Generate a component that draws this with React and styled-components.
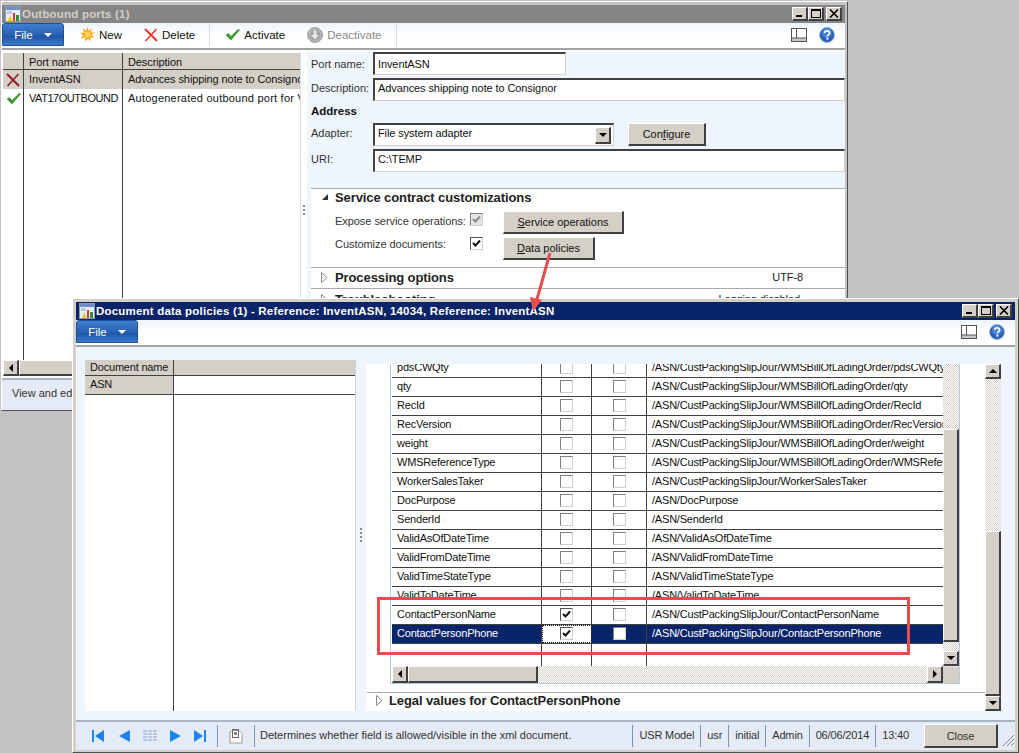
import React from 'react'
import styled, { createGlobalStyle } from 'styled-components'

const GlobalStyle = createGlobalStyle`
    html, body {
        margin: 0;
        padding: 0;
        background: #c4c3c4;
    }
    body {
        font-family: "Liberation Sans", Arial, sans-serif;
        font-size: 11px;
        color: #111;
    }
    * {
        box-sizing: border-box;
    }
`

const raised = `
    background: #d4d0c8;
    border-style: solid;
    border-width: 1px 2px 2px 1px;
    border-color: #fff #404040 #404040 #fff;
`

const hatch = `
    background: repeating-conic-gradient(#d4d0c8 0 25%, #fff 0 50%) 0 0 / 2px 2px;
`

const Canvas = styled.div`
    position: relative;
    width: 1019px;
    height: 753px;
    overflow: hidden;
`

const Frame = styled.div`
    position: absolute;
    left: ${(p) => p.$x}px;
    top: ${(p) => p.$y}px;
    width: ${(p) => p.$w}px;
    height: ${(p) => p.$h}px;
    display: flex;
    flex-direction: column;
    background: ${(p) => (p.$active ? '#d4d0c8' : '#c4c3c4')};
    border-style: solid;
    border-width: 1px;
    border-color: #fff #505050 #505050 #fff;
    padding: ${(p) => (p.$active ? '3px 3px 2px 3px' : '3px 2px 0 0')};
`

const TitleBar = styled.div`
    flex: 0 0 18px;
    display: flex;
    align-items: center;
    padding-left: 3px;
    background: ${(p) => (p.$active ? '#0a246a' : '#868586')};
    color: ${(p) => (p.$active ? '#fff' : '#d4d0c8')};
    font-size: 11.5px;
    font-weight: bold;
`

const TitleText = styled.span`
    margin-left: 1px;
    white-space: nowrap;
    letter-spacing: 0.2px;
`

const WinButtons = styled.div`
    margin-left: auto;
    margin-right: 3px;
    display: flex;
`

const WinButton = styled.div`
    ${raised}
    width: 16px;
    height: 14px;
    margin-left: ${(p) => (p.$gap ? '2px' : '0')};
    display: flex;
    align-items: center;
    justify-content: center;
`

const Toolbar = styled.div`
    flex: 0 0 ${(p) => p.$h}px;
    display: flex;
    align-items: center;
    padding-bottom: 2px;
    background: linear-gradient(#edf4fc, #fff 45%, #fff);
    border-bottom: 2px solid #a3a3a3;
`

const FileButton = styled.div`
    width: 62px;
    height: 23px;
    display: flex;
    align-items: center;
    justify-content: center;
    gap: 11px;
    color: #fff;
    font-size: 11.5px;
    border: 1px solid #1c4f9e;
    border-radius: 3px 3px 0 0;
    background: linear-gradient(#3f7fd0, #2a62b4 50%, #1f56a8 60%, #3c7bd0);
`

const FileCaret = styled.span`
    width: 0;
    height: 0;
    border-left: 4px solid transparent;
    border-right: 4px solid transparent;
    border-top: 4px solid #fff;
`

const ToolGroup = styled.div`
    display: flex;
    align-items: center;
    margin-left: 5px;
`

const ToolButton = styled.div`
    display: flex;
    align-items: center;
    gap: 4px;
    padding: 0 11px;
    font-size: 11.5px;
    color: ${(p) => (p.$off ? '#8a8a8a' : '#111')};
    white-space: nowrap;
`

const ToolSep = styled.div`
    width: 1px;
    height: 22px;
    background: #d8dde2;
    margin: 0 4px 0 3px;
`

const ToolRight = styled.div`
    margin-left: auto;
    display: flex;
    align-items: center;
    gap: 12px;
    margin-right: 10px;
`

const FirstBody = styled.div`
    flex: 1;
    min-height: 0;
    display: flex;
    padding-top: 2px;
    background: #fff;
`

const PortList = styled.div`
    flex: 0 0 299px;
    display: flex;
    flex-direction: column;
    padding: 1px 0 2px 1px;
    border-right: 1px solid #d6e0ea;
`

const PortRow = styled.div`
    display: grid;
    grid-template-columns: 21px 99px 1fr;
    flex: ${(p) => (p.$fill ? '1' : `0 0 ${p.$h || 19}px`)};
    background: ${(p) => (p.$on ? '#d4d0c8' : '#fff')};
    border-bottom: ${(p) => (p.$head ? '1px solid #404040' : '0')};
`

const PortCell = styled.div`
    display: flex;
    align-items: center;
    padding: ${(p) => (p.$icon ? '0 0 0 3px' : p.$head ? '1px 0 0 5px' : '0 0 2px 5px')};
    background: ${(p) => (p.$head ? '#d4d0c8' : 'transparent')};
    border-right: ${(p) => (p.$last ? '0' : '1px solid #404040')};
    letter-spacing: ${(p) => p.$spacing ?? -0.1}px;
    white-space: nowrap;
    overflow: hidden;
`

const HScrollBar = styled.div`
    flex: 0 0 ${(p) => p.$h || 17}px;
    display: flex;
    ${hatch}
`

const ScrollButton = styled.div`
    ${raised}
    flex: 0 0 ${(p) => p.$w || 16}px;
    display: flex;
    align-items: center;
    justify-content: center;
`

const HThumb = styled.div`
    ${raised}
    flex: 0 0 ${(p) => p.$w}px;
`

const Splitter = styled.div`
    flex: 0 0 ${(p) => p.$w}px;
    display: flex;
    flex-direction: column;
    align-items: center;
    gap: 2px;
    padding-top: ${(p) => p.$top}px;
`

const SplitDot = styled.span`
    width: 2px;
    height: 2px;
    background: #8a8a8a;
`

const FormPanel = styled.div`
    flex: 1;
    min-width: 0;
    display: flex;
    flex-direction: column;
    background: #eef5fd;
    padding-left: 4px;
    overflow: hidden;
`

const FieldRow = styled.div`
    flex: 0 0 23px;
    display: flex;
    align-items: center;
    margin-top: ${(p) => p.$top || 0}px;
`

const FieldLabel = styled.div`
    flex: 0 0 62px;
    color: #333;
    white-space: nowrap;
    padding-bottom: ${(p) => (p.$up ? '4px' : '0')};
`

const Field = styled.div`
    width: ${(p) => (p.$w ? `${p.$w}px` : 'auto')};
    flex: ${(p) => (p.$w ? '0 0 auto' : '1')};
    height: 23px;
    display: flex;
    align-items: center;
    padding: 0 2px ${(p) => (p.$up ? '4px' : '0')} 3px;
    background: #fff;
    letter-spacing: -0.1px;
    border-style: solid;
    border-width: 2px 1px 1px 2px;
    border-color: #404040 #d4d0c8 #d4d0c8 #404040;
`

const ComboButton = styled.div`
    ${raised}
    width: 16px;
    height: 17px;
    margin-left: auto;
    margin-bottom: -4px;
    display: flex;
    align-items: center;
    justify-content: center;
`

const GroupTitle = styled.div`
    flex: 0 0 20px;
    display: flex;
    align-items: center;
    font-weight: bold;
    font-size: 11.5px;
`

const FormButton = styled.div`
    ${raised}
    width: ${(p) => p.$w}px;
    height: 23px;
    margin-left: ${(p) => p.$left || 0}px;
    display: flex;
    align-items: center;
    justify-content: center;
    font-size: 11px;
    u {
        text-decoration: underline;
    }
`

const FastTabs = styled.div`
    flex: 1;
    background: #fff;
    margin-top: 16px;
    min-height: 0;
    display: flex;
    flex-direction: column;
`

const FastTab = styled.div`
    flex: 0 0 ${(p) => p.$h}px;
    border-top: 1px solid #a8a8a8;
`

const FastHead = styled.div`
    height: 20px;
    display: flex;
    align-items: center;
    font-size: 13px;
    font-weight: bold;
    letter-spacing: -0.1px;
    color: #222;
    padding: 0 0 ${(p) => p.$up || 0}px 24px;
`

const FastCaret = styled.span`
    width: 12px;
    margin-left: -14px;
    margin-right: 2px;
    display: flex;
`

const FastValue = styled.span`
    margin-left: auto;
    margin-right: ${(p) => p.$right}px;
    font-size: 11px;
    font-weight: normal;
`

const OptionRow = styled.div`
    display: flex;
    align-items: center;
    height: ${(p) => p.$h}px;
    padding-left: 24px;
    margin-top: ${(p) => p.$top || 0}px;
`

const OptionLabel = styled.div`
    flex: 0 0 135px;
    color: #333;
    white-space: nowrap;
    letter-spacing: -0.05px;
    padding-bottom: ${(p) => p.$up || 0}px;
`

const Check = styled.div`
    width: 13px;
    height: 13px;
    flex: 0 0 13px;
    display: flex;
    align-items: center;
    justify-content: center;
    background: ${(p) => (p.$off ? '#e4e4e4' : '#fff')};
    border-style: solid;
    border-width: 1px;
    border-color: ${(p) =>
        p.$strong ? '#555 #d4d0c8 #d4d0c8 #555' : '#808080 #d4d0c8 #d4d0c8 #808080'};
`

const OptionCheck = styled.div`
    flex: 0 0 33px;
    display: flex;
    padding-bottom: ${(p) => p.$up || 0}px;
`

const StatusBar = styled.div`
    flex: 0 0 ${(p) => p.$h}px;
    display: flex;
    align-items: center;
    background: #e4ebf6;
    border-top: 2px solid #a9b4c4;
    color: #333;
    white-space: nowrap;
    padding-bottom: ${(p) => p.$up || 0}px;
`

const StatusLead = styled.span`
    padding-left: 10px;
`

const SecondBody = styled.div`
    flex: 1;
    min-height: 0;
    display: flex;
    background: #eef5fd;
    padding: 13px 14px 9px 9px;
`

const DocList = styled.div`
    flex: 0 0 271px;
    display: flex;
    flex-direction: column;
    background: #fff;
    border-right: 1px solid #c8d4e0;
`

const DocRow = styled.div`
    display: grid;
    grid-template-columns: 89px 1fr;
    flex: ${(p) => (p.$fill ? '1' : `0 0 ${p.$h}px`)};
    border-bottom: ${(p) => (p.$fill ? '0' : '1px solid #404040')};
`

const DocCell = styled.div`
    display: flex;
    align-items: center;
    padding: 0 0 2px 5px;
    letter-spacing: -0.2px;
    background: ${(p) => (p.$gray ? '#d4d0c8' : 'transparent')};
    border-right: ${(p) => (p.$last ? '0' : '1px solid #404040')};
`

const DetailPane = styled.div`
    flex: 0 0 619px;
    margin-top: 4px;
    display: flex;
    flex-direction: column;
    background: #fff;
`

const OuterScroll = styled.div`
    flex: 0 0 16px;
    margin-top: 4px;
    display: flex;
    flex-direction: column;
    ${hatch}
`

const VSpacer = styled.div`
    flex: ${(p) => (p.$h ? `0 0 ${p.$h}px` : '1')};
`

const VThumb = styled.div`
    ${raised}
    flex: ${(p) => (p.$h ? `0 0 ${p.$h}px` : '1')};
`

const GridBox = styled.div`
    flex: 0 0 320px;
    margin-left: 24px;
    width: 570px;
    display: flex;
    background: #fff;
    border-style: solid;
    border-width: 0 1px 1px 1px;
    border-color: #b4cbe6;
    padding-left: 1px;
`

const GridList = styled.div`
    flex: 0 0 551px;
    min-width: 0;
    display: flex;
    flex-direction: column;
`

const DataRow = styled.div`
    display: grid;
    grid-template-columns: 150px 50px 55px 1fr;
    align-content: end;
    flex: ${(p) => (p.$fill ? '1' : `0 0 ${p.$h}px`)};
    overflow: hidden;
    background: ${(p) => (p.$on ? '#0a246a' : '#fff')};
    color: ${(p) => (p.$on ? '#fff' : '#111')};
    letter-spacing: -0.2px;
    border-bottom: ${(p) => (p.$fill ? '0' : '1px solid #404040')};
`

const DataCell = styled.div`
    height: ${(p) => (p.$fill ? '22px' : '18px')};
    display: flex;
    align-items: center;
    justify-content: ${(p) => (p.$center ? 'center' : 'flex-start')};
    padding: 0 0 ${(p) => (p.$fill ? '0' : '2px')} ${(p) => (p.$center ? '0' : '5px')};
    border-right: ${(p) => (p.$last ? '0' : '1px solid #404040')};
    white-space: nowrap;
    overflow: hidden;
    background: ${(p) => (p.$focus ? '#fff' : 'transparent')};
    outline: ${(p) => (p.$focus ? '1px dotted #111' : '0')};
    outline-offset: -1px;
`

const GridVScroll = styled.div`
    flex: 0 0 16px;
    display: flex;
    flex-direction: column;
    ${hatch}
`

const ScrollCorner = styled.div`
    flex: 0 0 16px;
    background: #d4d0c8;
`

const LegalTab = styled.div`
    margin-top: 8px;
    margin-left: 1px;
    height: 19px;
    border-top: 1px solid #a8a8a8;
    display: flex;
    align-items: center;
    padding: 0 0 4px 9px;
    gap: 6px;
    font-size: 13px;
    font-weight: bold;
    letter-spacing: -0.1px;
    color: #222;
`

const NavGroup = styled.div`
    display: flex;
    align-items: center;
    padding-left: 16px;
`

const NavIcon = styled.span`
    display: flex;
    margin-right: ${(p) => p.$gap}px;
`

const StatusSep = styled.span`
    width: 1px;
    height: 22px;
    background: #7c93b4;
    margin: 0 ${(p) => p.$right ?? 6}px 0 ${(p) => p.$left ?? 6}px;
`

const StatusMessage = styled.span`
    padding-bottom: 2px;
`

const StatusRight = styled.div`
    margin-left: auto;
    display: flex;
    align-items: center;
    letter-spacing: -0.15px;
`

const CloseButton = styled.div`
    ${raised}
    width: 74px;
    height: 24px;
    margin-left: 15px;
    display: flex;
    align-items: center;
    justify-content: center;
`

const Grip = styled.div`
    flex: 0 0 17px;
    align-self: flex-end;
    height: 14px;
    display: flex;
    justify-content: flex-end;
`

const RedBox = styled.div`
    position: absolute;
    left: 377px;
    top: 597px;
    width: 533px;
    height: 58px;
    border: 3px solid #e84c4c;
`

const ArrowLayer = styled.svg`
    position: absolute;
    left: 525px;
    top: 245px;
`

const AppIcon = () => (
    <svg width="16" height="16" viewBox="0 0 16 16">
        <rect x="0.5" y="0.5" width="15" height="15" fill="#e8eef6" stroke="#8d99ad" />
        <rect x="1" y="1" width="14" height="3" fill="#6f8fc4" />
        <rect x="2" y="5" width="5" height="3" fill="#b9c9e2" />
        <path d="M3 15 L5 9 L7 15 Z" fill="#f5c211" />
        <rect x="8" y="7" width="2" height="8" fill="#d8382c" />
        <rect x="11" y="9" width="3" height="6" fill="#2f8f3a" />
    </svg>
)

const SunIcon = () => (
    <svg width="15" height="15" viewBox="0 0 15 15">
        <path
            d="M7.5 0 L8.7 4 L12 1.6 L10.7 5.4 L15 5.6 L11.4 7.8 L14.6 10.7 L10.5 10.3 L10.6 14.6 L7.9 11.3 L5.4 14.8 L5 10.5 L0.8 11.6 L3.6 8.2 L0 6 L4.2 5.5 L2.8 1.6 L6.3 3.8 Z"
            fill="#f9a11b"
        />
        <circle cx="7.5" cy="7.5" r="3.2" fill="#fcd04a" />
    </svg>
)

const CrossIcon = ({ color = '#dc3a2a', size = 14 }) => (
    <svg width={size} height={size} viewBox="0 0 14 14">
        <path d="M1 1 L13 13" stroke={color} strokeWidth="2" fill="none" />
        <path d="M12.5 1 L1.5 13" stroke={color} strokeWidth="1.6" fill="none" />
    </svg>
)

const TickIcon = () => (
    <svg width="15" height="13" viewBox="0 0 15 13">
        <path d="M1 7 L3.5 5.5 L6 8.5 L13.5 1 L14.5 2 L6 12 Z" fill="#3a9a28" stroke="#2b7a1c" strokeWidth="0.5" />
    </svg>
)

const DownCircleIcon = () => (
    <svg width="16" height="16" viewBox="0 0 16 16">
        <circle cx="8" cy="8" r="7.5" fill="#b8b8b8" stroke="#9a9a9a" />
        <circle cx="8" cy="8" r="5.5" fill="#a4a4a4" />
        <path d="M6.5 3.5 H9.5 V8 H12 L8 12.5 L4 8 H6.5 Z" fill="#e8e8e8" />
    </svg>
)

const LayoutIcon = () => (
    <svg width="16" height="14" viewBox="0 0 16 14">
        <rect x="0.5" y="0.5" width="15" height="13" fill="#fff" stroke="#555" />
        <rect x="1" y="10" width="14" height="3" fill="#c8c8c8" />
        <path d="M5.5 0.5 V10" stroke="#555" />
        <path d="M0.5 10 H15.5" stroke="#555" />
    </svg>
)

const HelpIcon = () => (
    <svg width="16" height="16" viewBox="0 0 16 16">
        <circle cx="8" cy="8" r="7.5" fill="#2a5fb8" stroke="#9db4d4" />
        <circle cx="8" cy="6" r="5" fill="#4a82d8" />
        <path d="M5.6 6 C5.6 3.2 10.6 3.2 10.6 6 C10.6 7.6 8.4 7.6 8.4 9.4" fill="none" stroke="#fff" strokeWidth="1.6" />
        <rect x="7.4" y="10.6" width="2" height="2" fill="#fff" />
    </svg>
)

const MinGlyph = () => (
    <svg width="10" height="9" viewBox="0 0 10 9">
        <rect x="1" y="6" width="6" height="2" fill="#000" />
    </svg>
)

const MaxGlyph = () => (
    <svg width="10" height="9" viewBox="0 0 10 9">
        <rect x="0.5" y="0.5" width="9" height="8" fill="none" stroke="#000" />
        <rect x="0" y="0" width="10" height="2" fill="#000" />
    </svg>
)

const CloseGlyph = () => (
    <svg width="10" height="9" viewBox="0 0 10 9">
        <path d="M1 0.5 L9 8.5 M9 0.5 L1 8.5" stroke="#000" strokeWidth="1.6" />
    </svg>
)

const Tri = ({ dir = 'down' }) => {
    const points = {
        down: '0,0 8,0 4,4',
        up: '0,4 8,4 4,0',
        left: '4,0 4,8 0,4',
        right: '0,0 0,8 4,4',
    }[dir]
    const horizontal = dir === 'left' || dir === 'right'
    return (
        <svg width={horizontal ? 4 : 8} height={horizontal ? 8 : 4}>
            <polygon points={points} fill="#000" />
        </svg>
    )
}

const TickMark = ({ color = '#111' }) => (
    <svg width="9" height="9" viewBox="0 0 9 9">
        <path d="M1 4 L3.5 6.5 L8 1.5" fill="none" stroke={color} strokeWidth="2" />
    </svg>
)

const OpenCaret = () => (
    <svg width="8" height="8" viewBox="0 0 8 8">
        <polygon points="7,1 7,7 1,7" fill="#333" />
    </svg>
)

const ClosedCaret = () => (
    <svg width="7" height="11" viewBox="0 0 7 11">
        <polygon points="0.5,0.5 6,5.5 0.5,10.5" fill="#fff" stroke="#888" />
    </svg>
)

const First = () => (
    <svg width="12" height="12" viewBox="0 0 12 12">
        <rect x="0" y="0" width="2" height="12" fill="#1d84ee" />
        <polygon points="12,0 12,12 3,6" fill="#1d84ee" />
    </svg>
)

const Prev = () => (
    <svg width="12" height="12" viewBox="0 0 12 12">
        <polygon points="12,0 12,12 1,6" fill="#1d84ee" />
    </svg>
)

const Next = () => (
    <svg width="12" height="12" viewBox="0 0 12 12">
        <polygon points="0,0 0,12 11,6" fill="#1d84ee" />
    </svg>
)

const Last = () => (
    <svg width="12" height="12" viewBox="0 0 12 12">
        <polygon points="0,0 0,12 9,6" fill="#1d84ee" />
        <rect x="10" y="0" width="2" height="12" fill="#1d84ee" />
    </svg>
)

const GridGlyph = () => (
    <svg width="14" height="12" viewBox="0 0 14 12">
        {[0, 3, 6, 9].map((y) =>
            [0, 5, 10].map((x) => (
                <rect key={`${x}-${y}`} x={x} y={y} width="4" height="2" fill="#b4c8e4" />
            ))
        )}
    </svg>
)

const ClipGlyph = () => (
    <svg width="14" height="15" viewBox="0 0 14 15">
        <path d="M3.5 1.5 H10 L13 4.5 V14 H1 V3 Z" fill="#fff" stroke="#999" />
        <rect x="3.5" y="0.5" width="6" height="8" fill="none" stroke="#666" />
        <rect x="5" y="3" width="3" height="3" fill="#888" />
    </svg>
)

const GripGlyph = () => (
    <svg width="13" height="13" viewBox="0 0 13 13">
        <path d="M12 1 L1 12 M12 5 L5 12 M12 9 L9 12" stroke="#8a8a8a" fill="none" />
    </svg>
)

const WMS = '/ASN/CustPackingSlipJour/WMSBillOfLadingOrder/'

const rows = [
    { name: 'pdsCWQty', path: `${WMS}pdsCWQty` },
    { name: 'qty', path: `${WMS}qty` },
    { name: 'RecId', path: `${WMS}RecId` },
    { name: 'RecVersion', path: `${WMS}RecVersion` },
    { name: 'weight', path: `${WMS}weight` },
    { name: 'WMSReferenceType', path: `${WMS}WMSReferenceType` },
    { name: 'WorkerSalesTaker', path: '/ASN/CustPackingSlipJour/WorkerSalesTaker' },
    { name: 'DocPurpose', path: '/ASN/DocPurpose' },
    { name: 'SenderId', path: '/ASN/SenderId' },
    { name: 'ValidAsOfDateTime', path: '/ASN/ValidAsOfDateTime' },
    { name: 'ValidFromDateTime', path: '/ASN/ValidFromDateTime' },
    { name: 'ValidTimeStateType', path: '/ASN/ValidTimeStateType' },
    { name: 'ValidToDateTime', path: '/ASN/ValidToDateTime' },
    { name: 'ContactPersonName', path: '/ASN/CustPackingSlipJour/ContactPersonName', checked: true },
    { name: 'ContactPersonPhone', path: '/ASN/CustPackingSlipJour/ContactPersonPhone', checked: true, on: true },
]

function WindowButtons() {
    return (
        <WinButtons>
            <WinButton>
                <MinGlyph />
            </WinButton>
            <WinButton>
                <MaxGlyph />
            </WinButton>
            <WinButton $gap>
                <CloseGlyph />
            </WinButton>
        </WinButtons>
    )
}

function OutboundPorts() {
    return (
        <Frame $x={1} $y={1} $w={847} $h={410}>
            <TitleBar>
                <AppIcon />
                <TitleText>Outbound ports (1)</TitleText>
                <WindowButtons />
            </TitleBar>
            <Toolbar $h={27}>
                <FileButton>
                    File <FileCaret />
                </FileButton>
                <ToolGroup>
                    <ToolButton>
                        <SunIcon />
                        New
                    </ToolButton>
                    <ToolButton>
                        <CrossIcon />
                        Delete
                    </ToolButton>
                    <ToolSep />
                    <ToolButton>
                        <TickIcon />
                        Activate
                    </ToolButton>
                    <ToolButton $off>
                        <DownCircleIcon />
                        Deactivate
                    </ToolButton>
                    <ToolSep />
                </ToolGroup>
                <ToolRight>
                    <LayoutIcon />
                    <HelpIcon />
                </ToolRight>
            </Toolbar>
            <FirstBody>
                <PortList>
                    <PortRow $head $h={17}>
                        <PortCell $head />
                        <PortCell $head>Port name</PortCell>
                        <PortCell $head $last>
                            Description
                        </PortCell>
                    </PortRow>
                    <PortRow $on>
                        <PortCell $icon>
                            <CrossIcon color="#8e1c1c" />
                        </PortCell>
                        <PortCell>InventASN</PortCell>
                        <PortCell $last>Advances shipping note to Consignor</PortCell>
                    </PortRow>
                    <PortRow>
                        <PortCell $icon>
                            <TickIcon />
                        </PortCell>
                        <PortCell $spacing={-0.45}>VAT17OUTBOUND</PortCell>
                        <PortCell $last $spacing={0.23}>
                            Autogenerated outbound port for VAT17
                        </PortCell>
                    </PortRow>
                    <PortRow $fill>
                        <PortCell />
                        <PortCell />
                        <PortCell $last />
                    </PortRow>
                    <HScrollBar $h={16}>
                        <ScrollButton>
                            <Tri dir="left" />
                        </ScrollButton>
                        <HThumb $w={200} />
                    </HScrollBar>
                </PortList>
                <Splitter $w={6} $top={153}>
                    <SplitDot />
                    <SplitDot />
                    <SplitDot />
                </Splitter>
                <FormPanel>
                    <FieldRow>
                        <FieldLabel>Port name:</FieldLabel>
                        <Field $w={193}>InventASN</Field>
                    </FieldRow>
                    <FieldRow $top={3}>
                        <FieldLabel $up>Description:</FieldLabel>
                        <Field $up>Advances shipping note to Consignor</Field>
                    </FieldRow>
                    <GroupTitle>Address</GroupTitle>
                    <FieldRow $top={2}>
                        <FieldLabel $up>Adapter:</FieldLabel>
                        <Field $w={241} $up>
                            File system adapter
                            <ComboButton>
                                <Tri />
                            </ComboButton>
                        </Field>
                        <FormButton $w={78} $left={14}>
                            <span>
                                Con<u>f</u>igure
                            </span>
                        </FormButton>
                    </FieldRow>
                    <FieldRow $top={3}>
                        <FieldLabel $up>URI:</FieldLabel>
                        <Field $up>C:\TEMP</Field>
                    </FieldRow>
                    <FastTabs>
                        <FastTab $h={79}>
                            <FastHead $up={4}>
                                <FastCaret>
                                    <OpenCaret />
                                </FastCaret>
                                Service contract customizations
                            </FastHead>
                            <OptionRow $h={23} $top={2}>
                                <OptionLabel $up={4}>Expose service operations:</OptionLabel>
                                <OptionCheck $up={6}>
                                    <Check $off>
                                        <TickMark color="#8a8a8a" />
                                    </Check>
                                </OptionCheck>
                                <FormButton $w={121}>
                                    <span>
                                        <u>S</u>ervice operations
                                    </span>
                                </FormButton>
                            </OptionRow>
                            <OptionRow $h={23} $top={3}>
                                <OptionLabel $up={10}>Customize documents:</OptionLabel>
                                <OptionCheck $up={10}>
                                    <Check $strong>
                                        <TickMark />
                                    </Check>
                                </OptionCheck>
                                <FormButton $w={92}>
                                    <span>
                                        <u>D</u>ata policies
                                    </span>
                                </FormButton>
                            </OptionRow>
                        </FastTab>
                        <FastTab $h={21}>
                            <FastHead $up={2}>
                                <FastCaret>
                                    <ClosedCaret />
                                </FastCaret>
                                Processing options
                                <FastValue $right={42}>UTF-8</FastValue>
                            </FastHead>
                        </FastTab>
                        <FastTab $h={21}>
                            <FastHead>
                                <FastCaret>
                                    <ClosedCaret />
                                </FastCaret>
                                Troubleshooting
                                <FastValue $right={45}>Logging disabled</FastValue>
                            </FastHead>
                        </FastTab>
                    </FastTabs>
                </FormPanel>
            </FirstBody>
            <StatusBar $h={32} $up={4}>
                <StatusLead>View and edit</StatusLead>
            </StatusBar>
        </Frame>
    )
}

function DataGrid() {
    return (
        <GridBox>
            <GridList>
                {rows.map((row, i) => (
                    <DataRow key={row.name} $h={i === 0 ? 14 : 19} $on={row.on}>
                        <DataCell>{row.name}</DataCell>
                        <DataCell $center $focus={row.on}>
                            <Check $strong={row.checked}>{row.checked && <TickMark />}</Check>
                        </DataCell>
                        <DataCell $center>
                            <Check />
                        </DataCell>
                        <DataCell $last>{row.path}</DataCell>
                    </DataRow>
                ))}
                <DataRow $fill>
                    <DataCell $fill />
                    <DataCell $fill />
                    <DataCell $fill />
                    <DataCell $fill $last />
                </DataRow>
                <HScrollBar>
                    <ScrollButton>
                        <Tri dir="left" />
                    </ScrollButton>
                    <HThumb $w={130} />
                    <VSpacer />
                    <ScrollButton>
                        <Tri dir="right" />
                    </ScrollButton>
                </HScrollBar>
            </GridList>
            <GridVScroll>
                <VSpacer $h={65} />
                <VThumb />
                <VSpacer $h={9} />
                <ScrollButton $w={15}>
                    <Tri />
                </ScrollButton>
                <VSpacer $h={1} />
                <ScrollCorner />
            </GridVScroll>
        </GridBox>
    )
}

function DocumentPolicies() {
    return (
        <Frame $active $x={72} $y={298} $w={947} $h={455}>
            <TitleBar $active>
                <AppIcon />
                <TitleText>Document data policies (1) - Reference: InventASN, 14034, Reference: InventASN</TitleText>
                <WindowButtons />
            </TitleBar>
            <Toolbar $h={26}>
                <FileButton>
                    File <FileCaret />
                </FileButton>
                <ToolRight>
                    <LayoutIcon />
                    <HelpIcon />
                </ToolRight>
            </Toolbar>
            <SecondBody>
                <DocList>
                    <DocRow $h={16}>
                        <DocCell $gray>Document name</DocCell>
                        <DocCell $gray $last />
                    </DocRow>
                    <DocRow $h={19}>
                        <DocCell $gray>ASN</DocCell>
                        <DocCell $last />
                    </DocRow>
                    <DocRow $fill>
                        <DocCell />
                        <DocCell $last />
                    </DocRow>
                </DocList>
                <Splitter $w={10} $top={168}>
                    <SplitDot />
                    <SplitDot />
                    <SplitDot />
                    <SplitDot />
                </Splitter>
                <DetailPane>
                    <DataGrid />
                    <LegalTab>
                        <ClosedCaret />
                        Legal values for ContactPersonPhone
                    </LegalTab>
                </DetailPane>
                <OuterScroll>
                    <ScrollButton $w={15}>
                        <Tri dir="up" />
                    </ScrollButton>
                    <VSpacer $h={152} />
                    <VThumb />
                    <ScrollButton $w={15}>
                        <Tri />
                    </ScrollButton>
                </OuterScroll>
            </SecondBody>
            <StatusBar $h={30}>
                <NavGroup>
                    <NavIcon $gap={14}>
                        <First />
                    </NavIcon>
                    <NavIcon $gap={13}>
                        <Prev />
                    </NavIcon>
                    <NavIcon $gap={13}>
                        <GridGlyph />
                    </NavIcon>
                    <NavIcon $gap={12}>
                        <Next />
                    </NavIcon>
                    <NavIcon $gap={0}>
                        <Last />
                    </NavIcon>
                </NavGroup>
                <StatusSep $left={11} $right={11} />
                <ClipGlyph />
                <StatusSep $left={11} $right={5} />
                <StatusMessage>Determines whether field is allowed/visible in the xml document.</StatusMessage>
                <StatusRight>
                    <StatusSep />
                    <StatusMessage>USR Model</StatusMessage>
                    <StatusSep />
                    <StatusMessage>usr</StatusMessage>
                    <StatusSep />
                    <StatusMessage>initial</StatusMessage>
                    <StatusSep />
                    <StatusMessage>Admin</StatusMessage>
                    <StatusSep />
                    <StatusMessage>06/06/2014</StatusMessage>
                    <StatusSep />
                    <StatusMessage>13:40</StatusMessage>
                    <CloseButton>Close</CloseButton>
                    <Grip>
                        <GripGlyph />
                    </Grip>
                </StatusRight>
            </StatusBar>
        </Frame>
    )
}

export default function App() {
    return (
        <Canvas>
            <GlobalStyle />
            <OutboundPorts />
            <DocumentPolicies />
            <RedBox />
            <ArrowLayer width="40" height="75" viewBox="0 0 40 75">
                <path d="M25 8 L11.5 56" stroke="#e84c4c" strokeWidth="3" fill="none" />
                <polygon points="8,66 5,52 17,55" fill="#e84c4c" />
            </ArrowLayer>
        </Canvas>
    )
}
